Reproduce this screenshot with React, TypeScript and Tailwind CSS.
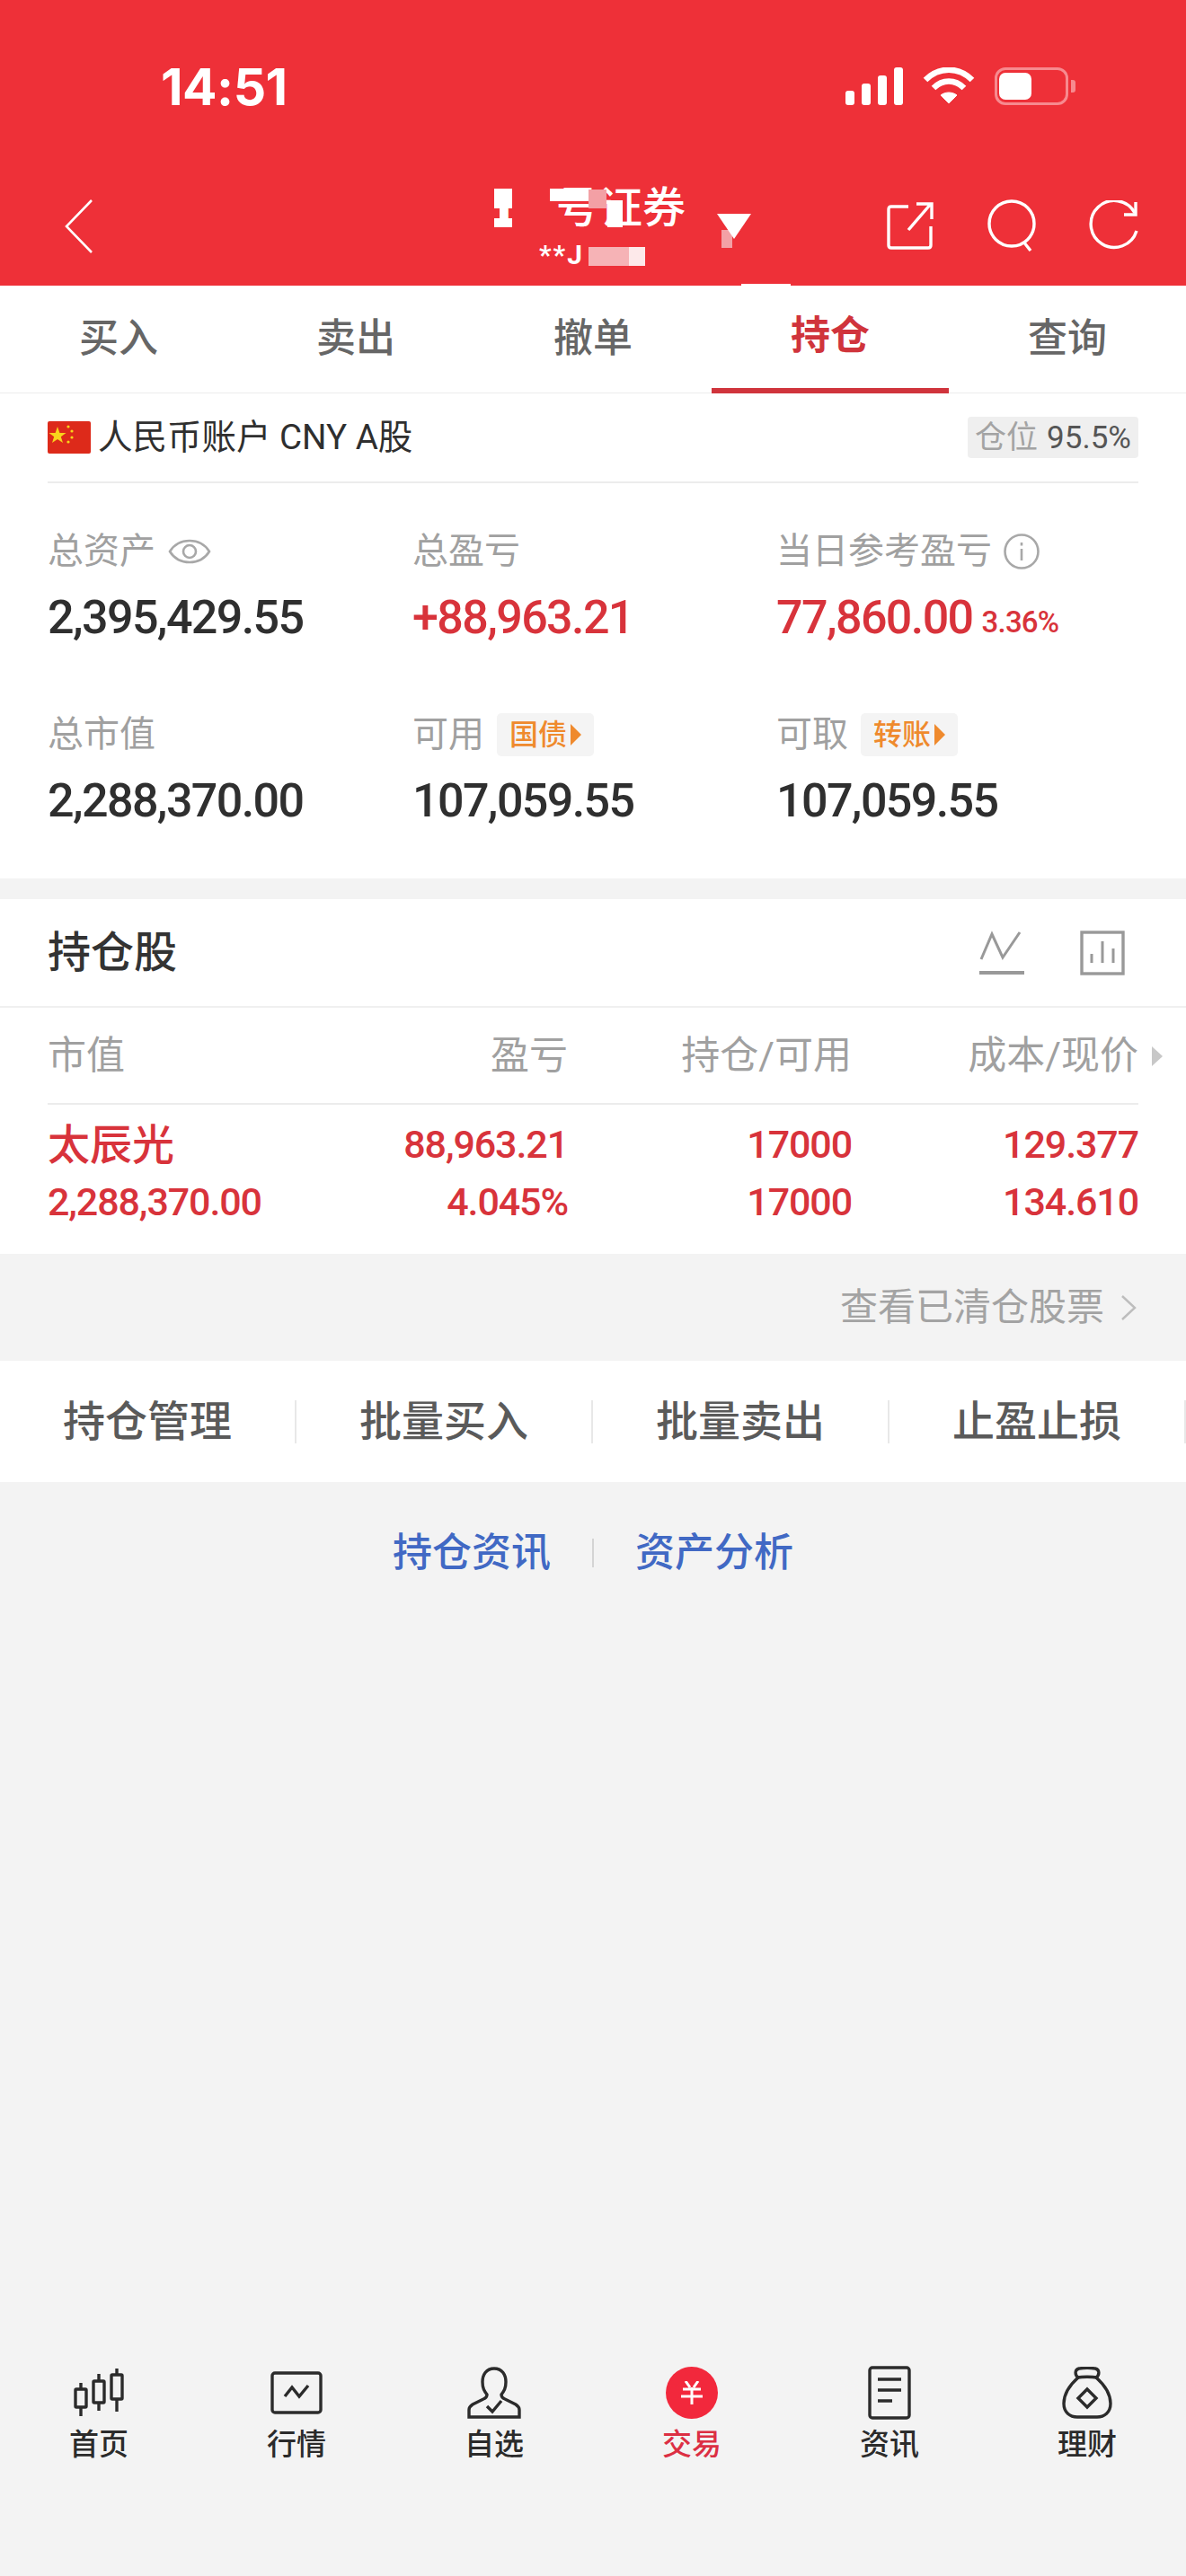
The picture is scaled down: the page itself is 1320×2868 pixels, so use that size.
import React from "react";

const CJK = "font-['Roboto','Noto_Sans_CJK_SC',sans-serif]";

function Stat({ label, value, extra, tail, red }: { label: string; value: string; extra?: React.ReactNode; tail?: string; red?: boolean }) {
  return (
    <div className="flex flex-col">
      <div className="flex h-[50px] items-center gap-[14px] pt-[2px] text-[40px] leading-[50px] text-[#a0a0a0]">
        <span>{label}</span>
        {extra}
      </div>
      <div className={`mt-[25px] flex h-[50px] items-end text-[52px] font-medium leading-[50px] tracking-[-1.6px] ${red ? "text-[#d8333b]" : "text-[#2f2f2f]"}`}>
        <span>{value}</span>
        {tail && <span className="ml-[10px] text-[33px] leading-[40px] tracking-[-0.8px]">{tail}</span>}
      </div>
    </div>
  );
}

function Tag({ text }: { text: string }) {
  return (
    <span className="flex h-[48px] w-[108px] items-center justify-center gap-[4px] rounded-[5px] bg-[#f4f4f4] text-[32px] font-medium leading-none text-[#ef8a2d]">
      {text}
      <svg width="12" height="24" viewBox="0 0 12 24"><path d="M0 0 L12 12 L0 24Z" fill="#ef8a2d" /></svg>
    </span>
  );
}

function NavItem({ label, active, children }: { label: string; active?: boolean; children: React.ReactNode }) {
  return (
    <div className="flex flex-col items-center">
      <div className="flex h-[62px] items-center justify-center">{children}</div>
      <span className={`mt-[7px] text-[33px] font-medium leading-[40px] ${active ? "text-[#dc2f43]" : "text-[#2b2b2b]"}`}>{label}</span>
    </div>
  );
}

const dark = { fill: "none", stroke: "#2b2b2b", strokeWidth: 3.4 };

export default function App() {
  return (
    <div className={`flex h-[2868px] w-[1320px] flex-col overflow-hidden bg-[#f3f3f3] ${CJK}`}>
      {/* Red header */}
      <header className="relative flex h-[318px] flex-col bg-[#ee3038] text-white">
        <div className="flex h-[194px] items-start justify-between pl-[179px] pr-[123px] pt-[67px]">
          <span className="font-['Inter',sans-serif] text-[57px] font-bold leading-[60px] tracking-[-0.5px]">14:51</span>
          <div className="flex items-center gap-[22px] pt-[8px]">
            <svg width="64" height="42" viewBox="0 0 64 42" fill="white">
              <rect x="0" y="26" width="10" height="16" rx="3" />
              <rect x="18" y="18" width="10" height="24" rx="3" />
              <rect x="36" y="9" width="10" height="33" rx="3" />
              <rect x="54" y="0" width="10" height="42" rx="3" />
            </svg>
            <svg width="58" height="42" viewBox="0 0 58 42" fill="none" stroke="white" strokeWidth="6.5">
              <path d="M3 14 C18 -1 40 -1 55 14" />
              <path d="M12 23 C22 13 36 13 46 23" />
              <path d="M29 40 L20 31 C25 27 33 27 38 31 Z" fill="white" strokeWidth="1" />
            </svg>
            <div className="flex items-center">
              <div className="flex h-[42px] w-[82px] items-center rounded-[12px] border-[3px] border-[#f78a8f] pl-[2px]">
                <div className="h-[30px] w-[36px] rounded-[7px] bg-white" />
              </div>
              <div className="ml-[3px] h-[14px] w-[5px] rounded-r-[3px] bg-[#f78a8f]" />
            </div>
          </div>
        </div>
        <div className="relative flex flex-1 items-start justify-between pl-[71px] pr-[53px] pt-[28px]">
          <svg width="34" height="60" viewBox="0 0 34 60" fill="none" stroke="white" strokeWidth="2.6"><path d="M31 1 L3 30 L31 59" /></svg>
          <div className="flex items-center gap-[56px]">
            <svg width="54" height="54" viewBox="0 0 54 54" fill="none" stroke="white" strokeWidth="3.4">
              <path d="M24 6 H5 Q2 6 2 9 V49 Q2 52 5 52 H46 Q49 52 49 49 V28" />
              <path d="M24 32 L49 3 M33 3 H50 V20" />
            </svg>
            <svg width="58" height="58" viewBox="0 0 58 58" fill="none" stroke="white" strokeWidth="3.4">
              <circle cx="29" cy="27" r="25" />
              <path d="M42 47 L50 57" />
            </svg>
            <svg width="56" height="56" viewBox="0 0 56 56" fill="none" stroke="white" strokeWidth="3.4">
              <path d="M52 14 A26 26 0 1 0 54 34" />
              <path d="M53 2 V16 H40" />
            </svg>
          </div>
          {/* Masked broker name */}
          <div className="absolute left-[547px] top-[8px] flex h-[60px] items-center text-[48px] font-medium leading-none">
            <span className="w-[72px] font-bold">1</span>
            <span>号证券</span>
          </div>
          <div className="absolute left-[574px] top-[8px] h-[60px] w-[36px] bg-[#ee3038]" />
          <div className="absolute left-[550px] top-[16px] h-[22px] w-[20px] bg-white" />
          <div className="absolute left-[556px] top-[38px] h-[12px] w-[9px] bg-white" />
          <div className="absolute left-[550px] top-[49px] h-[10px] w-[20px] bg-white" />
          <div className="absolute left-[612px] top-[16px] h-[14px] w-[43px] bg-white" />
          <div className="absolute left-[655px] top-[17px] h-[21px] w-[20px] bg-[#f3a0a5]" />
          <div className="absolute left-[676px] top-[29px] h-[30px] w-[17px] bg-white" />
          <div className="absolute left-[600px] top-[78px] flex h-[24px] items-center text-[30px] font-bold leading-none tracking-[2px]">**J</div>
          <div className="absolute left-[655px] top-[81px] h-[21px] w-[63px] bg-[#f6b3b6]" />
          <div className="absolute left-[700px] top-[81px] h-[21px] w-[18px] bg-[#fde9ea]" />
          <svg className="absolute left-[798px] top-[44px]" width="38" height="38" viewBox="0 0 38 38">
            <rect x="5" y="18" width="12" height="20" fill="#f3a0a5" />
            <path d="M0 0 H38 L19 28 Z" fill="white" />
          </svg>
        </div>
        <div className="absolute bottom-0 left-[825px] h-[2px] w-[55px] bg-white" />
      </header>

      {/* Tabs */}
      <nav className="grid h-[120px] grid-cols-5 border-b border-[#ececec] bg-white text-[44px] leading-none text-[#666666]">
        {["买入", "卖出", "撤单", "持仓", "查询"].map((t) => (
          <div
            key={t}
            className={`flex h-[120px] items-center justify-center ${t === "持仓" ? "border-b-[6px] border-[#d0343c] pb-[3px] font-semibold text-[#d0343c]" : "pb-[3px] font-medium"}`}
          >
            {t}
          </div>
        ))}
      </nav>

      {/* Account summary */}
      <section className="h-[540px] bg-white px-[53px]">
        <div className="flex h-[100px] items-center justify-between border-b-2 border-[#ececec]">
          <div className="flex items-center gap-[8px] text-[38.5px] leading-none text-[#2f2f2f]">
            <svg width="48" height="36" viewBox="0 0 48 36">
              <rect width="48" height="36" rx="2" fill="#dd2a1a" />
              <path d="M11 6 L13.4 13 H20.5 L14.8 17.2 L17 24 L11 20 L5 24 L7.2 17.2 L1.5 13 H8.6 Z" fill="#f8d41c" />
              <circle cx="23" cy="6" r="1.6" fill="#f8d41c" />
              <circle cx="27" cy="11" r="1.6" fill="#f8d41c" />
              <circle cx="27" cy="18" r="1.6" fill="#f8d41c" />
              <circle cx="23" cy="23" r="1.6" fill="#f8d41c" />
            </svg>
            <span>人民币账户 CNY A股</span>
          </div>
          <div className="flex h-[46px] w-[190px] items-center justify-center gap-[10px] rounded-[4px] bg-[#efefef] text-[35px] leading-none text-[#a3a3a3]">
            <span>仓位</span>
            <span className="text-[#555555]">95.5%</span>
          </div>
        </div>
        <div className="grid grid-cols-[406px_405px_1fr] gap-y-[79px] pt-[50px]">
          <Stat
            label="总资产"
            value="2,395,429.55"
            extra={
              <svg width="48" height="36" viewBox="0 0 48 36" fill="none" stroke="#a8a8a8" strokeWidth="2.6">
                <path d="M2 18 C12 2 36 2 46 18 C36 34 12 34 2 18Z" />
                <circle cx="24" cy="18" r="7" />
              </svg>
            }
          />
          <Stat label="总盈亏" value="+88,963.21" red />
          <Stat
            label="当日参考盈亏"
            value="77,860.00"
            tail="3.36%"
            red
            extra={
              <svg className="-ml-[2px]" width="42" height="42" viewBox="0 0 42 42" fill="none" stroke="#a8a8a8" strokeWidth="2.6">
                <circle cx="21" cy="21" r="18.5" />
                <path d="M21 18 V31 M21 11 V14.5" />
              </svg>
            }
          />
          <Stat label="总市值" value="2,288,370.00" />
          <Stat label="可用" value="107,059.55" extra={<Tag text="国债" />} />
          <Stat label="可取" value="107,059.55" extra={<Tag text="转账" />} />
        </div>
      </section>

      {/* Holdings */}
      <section className="mt-[23px] bg-white">
        <div className="flex h-[121px] items-center justify-between border-b-2 border-[#f0f0f0] pl-[53px] pr-[68px]">
          <span className="text-[48px] font-medium leading-none text-[#333333]">持仓股</span>
          <div className="flex items-center gap-[62px]">
            <svg width="50" height="50" viewBox="0 0 50 50" fill="none" stroke="#999999" strokeWidth="3">
              <path d="M2 32 L14 4 L26 30 L45 2" />
              <path d="M0 47 H50" strokeWidth="4" />
            </svg>
            <svg width="50" height="50" viewBox="0 0 50 50" fill="none" stroke="#999999" strokeWidth="3.4">
              <rect x="2" y="2" width="46" height="46" />
              <path d="M13 36 V26 M25 36 V12 M37 36 V20" strokeWidth="3" />
            </svg>
          </div>
        </div>
        <div className="relative mx-[53px] grid h-[108px] grid-cols-[300px_279px_316px_1fr] items-center border-b-2 border-[#ececec] text-[43px] leading-none text-[#a0a0a0]">
          <span>市值</span>
          <span className="text-right">盈亏</span>
          <span className="text-right">持仓/可用</span>
          <span className="text-right">成本/现价</span>
          <svg className="absolute -right-[27px] top-[43px]" width="12" height="22" viewBox="0 0 12 22"><path d="M0 0 L12 11 L0 22Z" fill="#c8c8c8" /></svg>
        </div>
        <div className="mx-[53px] grid h-[166px] grid-cols-[300px_279px_316px_1fr] grid-rows-[64px_64px] content-center items-center pb-[14px] text-[43px] font-medium leading-none tracking-[-1.1px] text-[#d8333b]">
          <span className="text-[47px] tracking-normal">太辰光</span>
          <span className="text-right">88,963.21</span>
          <span className="text-right">17000</span>
          <span className="text-right">129.377</span>
          <span>2,288,370.00</span>
          <span className="text-right">4.045%</span>
          <span className="text-right">17000</span>
          <span className="text-right">134.610</span>
        </div>
      </section>

      {/* Cleared */}
      <div className="flex h-[119px] items-center justify-end gap-[18px] pr-[55px] text-[42px] leading-none text-[#a3a3a3]">
        <span>查看已清仓股票</span>
        <svg width="18" height="30" viewBox="0 0 18 30" fill="none" stroke="#bdbdbd" strokeWidth="2.4"><path d="M2 2 L16 15 L2 28" /></svg>
      </div>

      {/* Actions */}
      <div className="grid h-[135px] grid-cols-[330px_330px_330px_330px] items-center bg-white text-[47px] font-medium leading-none text-[#5a5a5a]">
        {["持仓管理", "批量买入", "批量卖出", "止盈止损"].map((t) => (
          <div key={t} className="flex h-[48px] items-center justify-center border-r-2 border-[#e8e8e8]">{t}</div>
        ))}
      </div>

      {/* Links */}
      <div className="flex h-[158px] items-center justify-center gap-[46px] text-[44px] font-medium leading-none text-[#4169c4]">
        <span>持仓资讯</span>
        <div className="h-[32px] w-[2px] bg-[#d4d4d4]" />
        <span>资产分析</span>
      </div>

      <div className="flex-1" />

      {/* Bottom nav */}
      <nav className="grid h-[235px] grid-cols-6 items-start">
        <NavItem label="首页">
          <svg width="56" height="54" viewBox="0 0 56 54" {...dark}>
            <rect x="2" y="23" width="12" height="20" rx="1" />
            <path d="M8 16 V23 M8 43 V53" />
            <rect x="22" y="14" width="12" height="24" rx="1" />
            <path d="M28 6 V14 M28 38 V47" />
            <rect x="42" y="7" width="12" height="27" rx="1" />
            <path d="M48 0 V7 M48 34 V48" />
          </svg>
        </NavItem>
        <NavItem label="行情">
          <svg width="58" height="48" viewBox="0 0 58 48" {...dark}>
            <rect x="2" y="2" width="54" height="44" rx="3" />
            <path d="M16 28 L24 18 L32 28 L42 16" />
          </svg>
        </NavItem>
        <NavItem label="自选">
          <svg width="60" height="58" viewBox="0 0 60 58" {...dark}>
            <path d="M30 2 C21 2 17 9 17 17 C17 24 19 27 22 31 C22 34 21 35 18 36 L6 42 C3 44 2 45 2 48 V56 H58 V48 C58 45 57 44 54 42 L42 36 C39 35 38 34 38 31 C41 27 43 24 43 17 C43 9 39 2 30 2 Z" />
            <path d="M22 44 L28 50 L38 38" />
          </svg>
        </NavItem>
        <NavItem label="交易" active>
          <div className="flex h-[58px] w-[58px] items-center justify-center rounded-full bg-[#f2283c]">
            <svg width="24" height="26" viewBox="0 0 24 26" fill="none" stroke="white" strokeWidth="3">
              <path d="M5 0 L10 7 M19 0 L14 7 M2 9 H22 M0 17 H24 M12 7 V26" />
            </svg>
          </div>
        </NavItem>
        <NavItem label="资讯">
          <svg width="48" height="60" viewBox="0 0 48 60" {...dark}>
            <rect x="2" y="2" width="44" height="56" rx="3" />
            <path d="M11 15 H37 M11 27 H37 M11 39 H27" />
          </svg>
        </NavItem>
        <NavItem label="理财">
          <svg width="56" height="58" viewBox="0 0 56 58" {...dark}>
            <path d="M18 12 C14 9 14 3 19 2 C25 1 31 1 37 2 C42 3 42 9 38 12 C34 11 22 11 18 12 Z" />
            <path d="M18 12 C9 20 2 30 2 41 C2 51 9 56 17 56 H39 C47 56 54 51 54 41 C54 30 47 20 38 12" />
            <path d="M28 25 L38 35 L28 45 L18 35 Z" />
          </svg>
        </NavItem>
      </nav>
    </div>
  );
}
